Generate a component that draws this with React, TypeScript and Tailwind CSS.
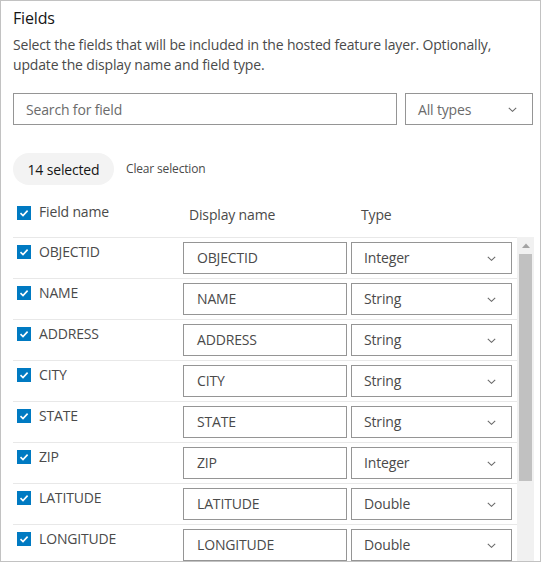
import React from 'react';

const fields: { name: string; type: string }[] = [
    { name: 'OBJECTID', type: 'Integer' },
    { name: 'NAME', type: 'String' },
    { name: 'ADDRESS', type: 'String' },
    { name: 'CITY', type: 'String' },
    { name: 'STATE', type: 'String' },
    { name: 'ZIP', type: 'Integer' },
    { name: 'LATITUDE', type: 'Double' },
    { name: 'LONGITUDE', type: 'Double' },
];

const Check = () => (
    <span className="flex h-[14px] w-[14px] shrink-0 items-center justify-center bg-[#007ac2]">
        <svg width="10" height="10" viewBox="0 0 10 10" fill="none">
            <path d="M1.5 5.2 L4 7.6 L8.6 2.6" stroke="white" strokeWidth="1.6" />
        </svg>
    </span>
);

const Chevron = () => (
    <svg width="9" height="5" viewBox="0 0 9 5" fill="none" className="shrink-0">
        <path d="M0.8 0.8 L4.5 4.3 L8.2 0.8" stroke="#6a6a6a" strokeWidth="1.1" />
    </svg>
);

const App: React.FC = () => {
    return (
        <div
            className="flex h-[562px] w-[541px] flex-col overflow-hidden border border-[#c2c2c2] bg-white pl-3 pr-[6px] pt-[5px] tracking-[-0.16px] text-[#4a4a4a]"
            style={{ fontFamily: '"Open Sans", sans-serif' }}
        >
            <h2 className="text-[16px] leading-6 text-[#151515]">Fields</h2>
            <p className="mt-[5px] pr-4 text-[14px] leading-5">
                Select the fields that will be included in the hosted feature layer. Optionally, update the display
                name and field type.
            </p>

            <div className="mt-[18px] flex gap-2 pr-px">
                <div className="flex h-8 flex-1 items-center border border-[#959595] px-3 text-[14px] text-[#6b6b6b]">
                    Search for field
                </div>
                <div className="flex h-8 w-[128px] items-center justify-between border border-[#959595] pl-3 pr-[15px] text-[14px] text-[#6b6b6b]">
                    All types
                    <Chevron />
                </div>
            </div>

            <div className="mt-[28px] flex items-center gap-3">
                <span className="flex h-8 w-[101px] items-center justify-center rounded-full bg-[#f3f3f3] text-[14px] text-[#151515]">
                    14 selected
                </span>
                <span className="text-[12px] text-[#4a4a4a]">Clear selection</span>
            </div>

            <div className="mt-[17px] flex h-[35px] items-start text-[14px] leading-5">
                <div className="flex w-[170px] items-start gap-[8px] pl-1">
                    <span className="mt-[4px]">
                        <Check />
                    </span>
                    Field name
                </div>
                <div className="mt-[3px] w-[167px] pl-[6px]">Display name</div>
                <div className="mt-[3px] pl-[11px]">Type</div>
            </div>

            <div className="flex min-h-0 flex-1">
                <div className="min-w-0 flex-1 overflow-hidden">
                    {fields.map((f) => (
                        <div key={f.name} className="flex h-[41px] items-start border-t border-[#e8e8e8] pt-1 text-[14px] leading-5">
                            <div className="flex w-[170px] items-start gap-[8px] pl-1">
                                <span className="mt-[3px]">
                                    <Check />
                                </span>
                                {f.name}
                            </div>
                            <div className="flex h-8 w-[164px] items-center border border-[#959595] px-[13px]">
                                {f.name}
                            </div>
                            <div className="ml-1 flex h-8 w-[161px] items-center justify-between border border-[#959595] pl-[12px] pr-[15px]">
                                {f.type}
                                <Chevron />
                            </div>
                        </div>
                    ))}
                </div>
                <div className="flex w-[17px] shrink-0 flex-col items-center bg-[#f1f1f1] pt-[6px]">
                    <svg width="8" height="5" viewBox="0 0 8 5">
                        <path d="M0 5 L4 0.5 L8 5 Z" fill="#a3a3a3" />
                    </svg>
                    <div className="mt-[6px] h-[227px] w-[13px] bg-[#c1c1c1]" />
                </div>
            </div>
        </div>
    );
};

export default App;
